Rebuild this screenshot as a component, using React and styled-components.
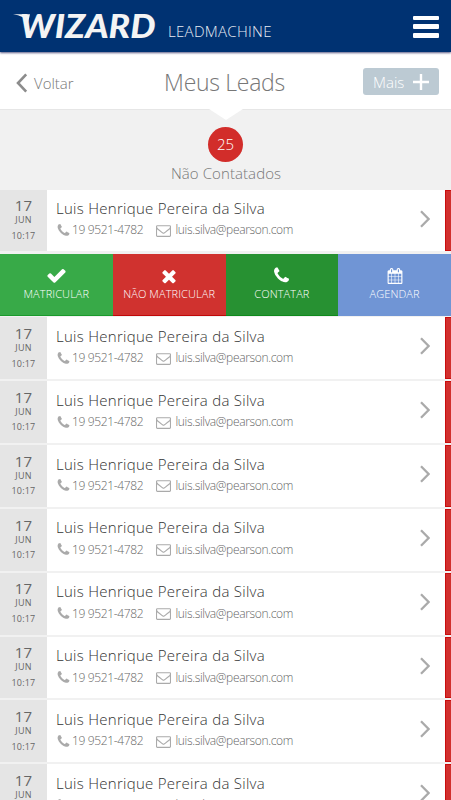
import styled, { createGlobalStyle } from "styled-components";

const ICONS = {
  phone:
    "M1600 1240q0 27-10 70.5t-21 68.5q-21 50-122 106-94 51-186 51-27 0-53-3.5t-57.5-12.5-47-14.5-55.5-20.5-49-18q-98-35-175-83-127-79-264-216t-216-264q-48-77-83-175-3-9-18-49t-20.5-55.5-14.5-47-12.5-57.5-3.5-53q0-92 51-186 56-101 106-122 25-11 68.5-21t70.5-10q14 0 21 3 18 6 53 76 11 19 30 54t35 63.5 31 53.5q3 4 17.5 25t21.5 35.5 7 28.5q0 20-28.5 50t-62 55-62 53-28.5 46q0 9 5 22.5t8.5 20.5 14 24 11.5 19q76 137 174 235t235 174q2 1 19 11.5t24 14 20.5 8.5 22.5 5q18 0 46-28.5t53-62 55-62 50-28.5q14 0 28.5 7t35.5 21.5 25 17.5q25 15 53.5 31t63.5 35 54 30q70 35 76 53 3 7 3 21z",
  envelope:
    "M1664 1504v-768q-32 36-69 66-268 206-426 338-51 43-83 67t-86.5 48.5-102.5 24.5h-2q-48 0-102.5-24.5t-86.5-48.5-83-67q-158-132-426-338-37-30-69-66v768q0 13 9.5 22.5t22.5 9.5h1472q13 0 22.5-9.5t9.5-22.5zm0-1051v-24.5l-.5-13-3-12.5-5.5-9-9-7.5-14-2.5h-1472q-13 0-22.5 9.5t-9.5 22.5q0 168 147 284 193 152 401 317 6 5 35 29.5t46 37.5 44.5 31.5 50.5 27.5 43 9h2q20 0 43-9t50.5-27.5 44.5-31.5 46-37.5 35-29.5q208-165 401-317 54-43 100.5-115.5t46.5-131.5zm128-37v1088q0 66-47 113t-113 47h-1472q-66 0-113-47t-47-113v-1088q0-66 47-113t113-47h1472q66 0 113 47t47 113z",
  check:
    "M1671 566q0 40-28 68l-724 724-136 136q-28 28-68 28t-68-28l-136-136-362-362q-28-28-28-68t28-68l136-136q28-28 68-28t68 28l294 295 656-657q28-28 68-28t68 28l136 136q28 28 28 68z",
  times:
    "M1490 1322q0 40-28 68l-136 136q-28 28-68 28t-68-28l-294-294-294 294q-28 28-68 28t-68-28l-136-136q-28-28-28-68t28-68l294-294-294-294q-28-28-28-68t28-68l136-136q28-28 68-28t68 28l294 294 294-294q28-28 68-28t68 28l136 136q28 28 28 68t-28 68l-294 294 294 294q28 28 28 68z",
  calendar:
    "M192 1664h288v-288h-288v288zm352 0h320v-288h-320v288zm-352-352h288v-320h-288v320zm352 0h320v-320h-320v320zm-352-384h288v-288h-288v288zm736 736h320v-288h-320v288zm-384-736h320v-288h-320v288zm768 736h288v-288h-288v288zm-384-352h320v-320h-320v320zm-352-864v-288q0-13-9.5-22.5t-22.5-9.5h-64q-13 0-22.5 9.5t-9.5 22.5v288q0 13 9.5 22.5t22.5 9.5h64q13 0 22.5-9.5t9.5-22.5zm736 864h288v-320h-288v320zm-384-384h320v-288h-320v288zm384 0h288v-288h-288v288zm32-480v-288q0-13-9.5-22.5t-22.5-9.5h-64q-13 0-22.5 9.5t-9.5 22.5v288q0 13 9.5 22.5t22.5 9.5h64q13 0 22.5-9.5t9.5-22.5zm384-64v1280q0 52-38 90t-90 38h-1408q-52 0-90-38t-38-90v-1280q0-52 38-90t90-38h128v-96q0-66 47-113t113-47h64q66 0 113 47t47 113v96h384v-96q0-66 47-113t113-47h64q66 0 113 47t47 113v96h128q52 0 90 38t38 90z",
};

const Icon = ({ name, size }) => (
  <svg width={size} height={size} viewBox="0 0 1792 1792" fill="currentColor">
    <path d={ICONS[name]} />
  </svg>
);

const lead = {
  day: "17",
  month: "JUN",
  time: "10:17",
  name: "Luis Henrique Pereira da Silva",
  phone: "19 9521-4782",
  email: "luis.silva@pearson.com",
};

const leads = Array.from({ length: 9 }, (_, id) => ({ id, ...lead }));

const actions = [
  { label: "MATRICULAR", icon: "check", size: 21, color: "#38aa48", edge: "#1a9a2c" },
  { label: "NÃO MATRICULAR", icon: "times", size: 20, color: "#d0322f", edge: "#c00808" },
  { label: "CONTATAR", icon: "phone", size: 19, color: "#279132", edge: "#0f8a1c" },
  { label: "AGENDAR", icon: "calendar", size: 16, color: "#7095d5", edge: "#7095d5" },
];

const LeadRow = ({ item }) => (
  <Row>
    <DateBox>
      <Day>{item.day}</Day>
      <Month>{item.month}</Month>
      <Time>{item.time}</Time>
    </DateBox>
    <Info>
      <Name>{item.name}</Name>
      <Contacts>
        <Phone>
          <Icon name="phone" size={15} />
          <span>{item.phone}</span>
        </Phone>
        <Email>
          <Icon name="envelope" size={15} />
          <span>{item.email}</span>
        </Email>
      </Contacts>
    </Info>
    <Arrow viewBox="0 0 10 18">
      <path d="M1 1.2 8.6 9 1 16.8" />
    </Arrow>
    <Status />
  </Row>
);

const App = () => {
  const [first, ...others] = leads;

  return (
    <Page>
      <GlobalStyle />
      <Header>
        <Logo viewBox="0 0 145 30">
          <path d="M0 3.2H17L15 12Q11 4.4 0 3.2Z" fill="#f4f4f4" />
          <text x="7" y="26.5" textLength="135.5" lengthAdjust="spacingAndGlyphs">
            WIZARD
          </text>
        </Logo>
        <Product>LEADMACHINE</Product>
        <Menu>
          <MenuLine />
          <MenuLine />
          <MenuLine />
        </Menu>
      </Header>
      <TitleBar>
        <Back>
          <BackArrow viewBox="0 0 12 20">
            <path d="M10.2 1.4 2 10l8.2 8.6" />
          </BackArrow>
          Voltar
        </Back>
        <Title>Meus Leads</Title>
        <MoreBtn>
          Mais
          <Plus viewBox="0 0 16 16">
            <path d="M8 0v16M0 8h16" />
          </Plus>
        </MoreBtn>
      </TitleBar>
      <Summary>
        <Count>25</Count>
        <SummaryText>Não Contatados</SummaryText>
      </Summary>
      <List>
        <LeadRow item={first} />
        <Actions>
          {actions.map((item) => (
            <Action key={item.label} $color={item.color} $edge={item.edge}>
              <ActionIcon>
                <Icon name={item.icon} size={item.size} />
              </ActionIcon>
              <ActionLabel>{item.label}</ActionLabel>
            </Action>
          ))}
        </Actions>
        {others.map((item) => (
          <LeadRow key={item.id} item={item} />
        ))}
      </List>
    </Page>
  );
};

export default App;

const GlobalStyle = createGlobalStyle`
  * {
    box-sizing: border-box;
  }
  body {
    margin: 0;
    font-family: "Open Sans", "Noto Sans", sans-serif;
    font-weight: 300;
  }
  svg {
    display: block;
    flex: none;
  }
`;

const Page = styled.div`
  width: 451px;
  height: 800px;
  overflow: hidden;
  background-color: #f1f1f1;
  white-space: nowrap;
`;
const Header = styled.header`
  position: relative;
  display: flex;
  height: 52px;
  padding-left: 13px;
  background-color: #003272;
  box-shadow: 0 1px 2px rgba(20, 20, 80, 0.7);
`;
const Logo = styled.svg`
  width: 145px;
  height: 30px;
  margin-top: 11px;
  overflow: visible;

  text {
    fill: #f4f4f4;
    font-family: "Lato", sans-serif;
    font-size: 32.5px;
    font-weight: 900;
    font-style: italic;
  }
`;
const Product = styled.span`
  margin: 21.4px 0 0 10px;
  color: #e8ecf4;
  font-size: 15px;
  letter-spacing: 0.3px;
  line-height: 20px;
`;
const Menu = styled.div`
  display: flex;
  flex-direction: column;
  gap: 4px;
  width: 26px;
  margin: 15.5px 12px 0 auto;
`;
const MenuLine = styled.span`
  height: 4.7px;
  border-radius: 1px;
  background-color: #fff;
`;
const TitleBar = styled.div`
  display: grid;
  grid-template-columns: 1fr auto 1fr;
  height: 58px;
  padding: 0 12px 0 16px;
  border-bottom: 1px solid #e6e6e6;
  background-color: #fff;
`;
const Back = styled.div`
  display: flex;
  align-items: center;
  gap: 6px;
  height: 20px;
  margin-top: 21.4px;
  color: #777;
  font-size: 15px;
`;
const BackArrow = styled.svg`
  width: 12px;
  height: 20px;
  fill: none;
  stroke: #8c8c8c;
  stroke-width: 2.6;
`;
const Title = styled.h1`
  margin: 13.4px 6px 0 0;
  color: #777;
  font-size: 23px;
  font-weight: 300;
  letter-spacing: -0.3px;
  line-height: 34px;
`;
const MoreBtn = styled.div`
  display: flex;
  align-items: center;
  justify-content: space-between;
  justify-self: end;
  width: 76px;
  height: 27px;
  margin-top: 16px;
  padding: 0 10px;
  border-radius: 3px;
  background-color: #bccad3;
  color: #fff;
  font-size: 15px;
  line-height: 26px;
`;
const Plus = styled.svg`
  width: 16px;
  height: 16px;
  stroke: #fff;
  stroke-width: 2.4;
`;
const Summary = styled.div`
  position: relative;
  display: flex;
  flex-direction: column;
  align-items: center;
  height: 79.5px;
  padding-top: 17px;

  &::before {
    content: "";
    position: absolute;
    top: -1px;
    left: 209px;
    border: 17px solid transparent;
    border-top: 11.5px solid #fff;
    border-bottom: 0;
  }
`;
const Count = styled.div`
  width: 35px;
  height: 35px;
  border-radius: 50%;
  background-color: #d22d2a;
  color: #fff;
  font-size: 15px;
  line-height: 35px;
  text-align: center;
`;
const SummaryText = styled.div`
  margin: 1px 0 0 1px;
  color: #777;
  font-size: 15px;
  letter-spacing: 0.08px;
  line-height: 20px;
`;
const List = styled.div`
  display: flex;
  flex-direction: column;
  gap: 2px;
`;
const Row = styled.div`
  display: flex;
  flex: none;
  height: 61.86px;
  background-color: #fff;
`;
const DateBox = styled.div`
  display: flex;
  flex-direction: column;
  align-items: center;
  width: 47px;
  padding-top: 7.8px;
  background-color: #e5e5e5;
  color: #666;
`;
const Day = styled.span`
  font-size: 15px;
  font-weight: 400;
  letter-spacing: 0.2px;
  line-height: 17px;
`;
const Month = styled.span`
  font-size: 9px;
  font-weight: 400;
  letter-spacing: 0.3px;
  line-height: 12px;
`;
const Time = styled.span`
  margin-top: 3.5px;
  font-size: 9px;
  font-weight: 400;
  letter-spacing: 0.2px;
  line-height: 12px;
`;
const Info = styled.div`
  flex: 1;
  padding: 8.6px 0 0 9px;
`;
const Name = styled.div`
  color: #333;
  font-size: 15px;
  letter-spacing: 0.28px;
  line-height: 20px;
`;
const Contacts = styled.div`
  display: flex;
  margin-top: 3.4px;
  color: #666;
  font-size: 12px;
  letter-spacing: -0.35px;
  line-height: 18px;

  svg {
    color: #aaa;
  }
`;
const Phone = styled.div`
  display: flex;
  align-items: center;
  gap: 1px;
  width: 100px;
`;
const Email = styled.div`
  display: flex;
  align-items: center;
  gap: 4.5px;
`;
const Arrow = styled.svg`
  width: 10px;
  height: 18px;
  margin: 20px 15px 0 0;
  fill: none;
  stroke: #aaa;
  stroke-width: 2.3;
`;
const Status = styled.div`
  width: 6px;
  border: 1px solid #c90d0d;
  border-right: 0;
  background-color: #d1302e;
`;
const Actions = styled.div`
  display: grid;
  flex: none;
  grid-template-columns: repeat(4, 1fr);
  height: 62.4px;
  margin-bottom: -0.54px;
  padding-top: 0.6px;
`;
const Action = styled.div`
  display: flex;
  flex-direction: column;
  align-items: center;
  border-bottom: 1px solid ${({ $edge }) => $edge};
  background-color: ${({ $color }) => $color};
  color: #fff;
`;
const ActionIcon = styled.div`
  display: flex;
  align-items: center;
  height: 22px;
  margin-top: 11px;
`;
const ActionLabel = styled.span`
  font-size: 11px;
  letter-spacing: 0.1px;
  line-height: 14px;
`;
